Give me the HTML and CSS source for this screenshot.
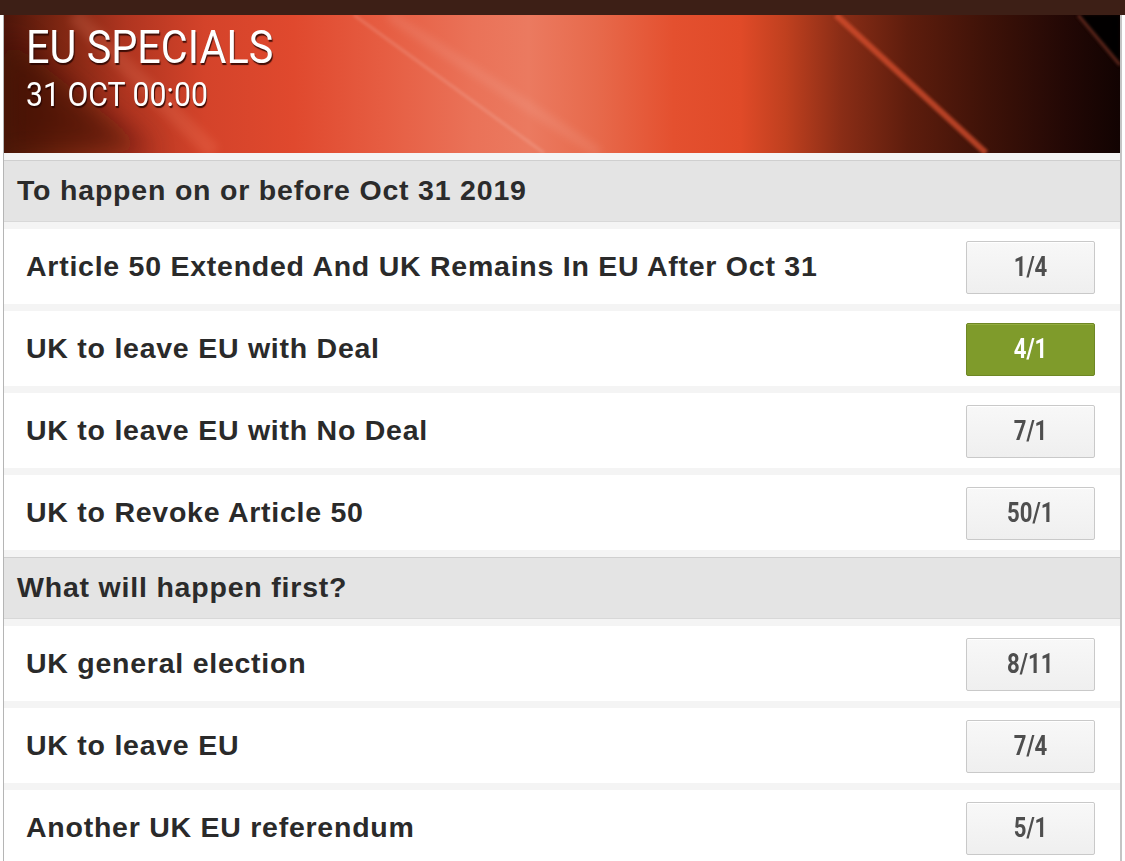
FILE: index.html
```html
<!DOCTYPE html>
<html lang="en">
<head>
<meta charset="utf-8">
<title>EU Specials</title>
<link rel="stylesheet" href="styles.css">
</head>
<body>
<div class="topbar"></div>
<div class="panel">
  <header class="hero">
    <svg class="streaks" viewBox="0 0 1116 138" preserveAspectRatio="none" aria-hidden="true">
      <defs>
        <filter id="blur4" x="-20%" y="-20%" width="140%" height="140%"><feGaussianBlur stdDeviation="4"/></filter>
        <filter id="blur12" x="-50%" y="-50%" width="200%" height="200%"><feGaussianBlur stdDeviation="14"/></filter>
        <filter id="blur2" x="-20%" y="-20%" width="140%" height="140%"><feGaussianBlur stdDeviation="1.8"/></filter>
      </defs>
      <polygon points="0,20 0,138 150,138" fill="#3a0d05" opacity="0.6" filter="url(#blur12)"/>
      <line x1="70" y1="0" x2="210" y2="138" stroke="#ff9a7a" stroke-width="16" opacity="0.16" filter="url(#blur4)"/>
      <line x1="350" y1="0" x2="540" y2="138" stroke="#ffffff" stroke-width="3" opacity="0.14" filter="url(#blur2)"/>
      <line x1="385" y1="0" x2="595" y2="138" stroke="#ffffff" stroke-width="9" opacity="0.09" filter="url(#blur4)"/>
      <line x1="832" y1="0" x2="982" y2="138" stroke="#d9502e" stroke-width="6" opacity="0.75" filter="url(#blur2)"/>
      <polygon points="1072,0 1116,0 1116,52" fill="#000000" opacity="0.9" filter="url(#blur2)"/>
      <line x1="1074" y1="0" x2="1116" y2="50" stroke="#b24a35" stroke-width="3" opacity="0.55" filter="url(#blur2)"/>
    </svg>
    <h1 class="hero-title"><span>EU SPECIALS</span></h1>
    <div class="hero-date"><span>31 OCT 00:00</span></div>
  </header>

  <div class="group">
    <div class="group-head">To happen on or before Oct 31 2019</div>
    <div class="row"><span class="sel">Article 50 Extended And UK Remains In EU After Oct 31</span><button class="odds"><span>1/4</span></button></div>
    <div class="row"><span class="sel">UK to leave EU with Deal</span><button class="odds odds-on"><span>4/1</span></button></div>
    <div class="row"><span class="sel">UK to leave EU with No Deal</span><button class="odds"><span>7/1</span></button></div>
    <div class="row"><span class="sel">UK to Revoke Article 50</span><button class="odds"><span>50/1</span></button></div>
  </div>

  <div class="group">
    <div class="group-head">What will happen first?</div>
    <div class="row"><span class="sel">UK general election</span><button class="odds"><span>8/11</span></button></div>
    <div class="row"><span class="sel">UK to leave EU</span><button class="odds"><span>7/4</span></button></div>
    <div class="row"><span class="sel">Another UK EU referendum</span><button class="odds"><span>5/1</span></button></div>
  </div>
</div>
</body>
</html>
```

FILE: styles.css
```css
html, body {
  margin: 0;
  padding: 0;
  background: #ffffff;
}
body {
  font-family: "Liberation Sans", Arial, sans-serif;
  overflow: hidden;
  height: 861px;
}
.topbar {
  height: 15px;
  background: #3d1f16;
}
.panel {
  margin-left: 3px;
  width: 1116px;
  border-left: 1px solid #b5b5b5;
  border-right: 2px solid #c4c4c4;
  background: #ffffff;
}
.hero {
  position: relative;
  height: 138px;
  overflow: hidden;
  padding: 7px 0 0 22px;
  box-sizing: border-box;
  background:
    linear-gradient(90deg,
      #4e160a 0%,
      #7e2612 5%,
      #b03520 11%,
      #d4432a 18%,
      #e0492e 26%,
      #e65d42 34%,
      #ea7258 42%,
      #eb7a60 47%,
      #e76a4c 53%,
      #e4502f 60%,
      #e04a28 66%,
      #c0401f 70%,
      #8a2d16 75%,
      #5e1d0d 81%,
      #3e1208 88%,
      #230805 95%,
      #120302 100%);
}
.streaks {
  position: absolute;
  inset: 0;
  width: 100%;
  height: 100%;
}
.hero-title {
  position: relative;
  margin: 0;
  font-family: Roboto, "Liberation Sans", sans-serif;
  font-weight: 400;
  font-size: 46px;
  line-height: 50px;
  color: #ffffff;
  text-shadow: 1px 2px 1px rgba(40,5,0,0.85);
}
.hero-title span,
.hero-date span {
  display: inline-block;
  transform: scaleX(0.9);
  transform-origin: left center;
  white-space: nowrap;
}
.hero-date span {
  transform: scaleX(0.89);
}
.hero-date {
  position: relative;
  margin-top: 3px;
  font-family: Roboto, "Liberation Sans", sans-serif;
  font-size: 34px;
  line-height: 38px;
  color: #ffffff;
  text-shadow: 1px 2px 1px rgba(40,5,0,0.85);
}
.group-head {
  border-top: 7px solid #f4f4f4;
  border-bottom: 1px solid #d8d8d8;
  box-shadow: inset 0 1px 0 #cfcfcf;
  background: #e4e4e4;
  height: 61px;
  padding-left: 13px;
  display: flex;
  align-items: center;
  font-size: 28.5px;
  letter-spacing: 0.8px;
  font-weight: 700;
  color: #2b2b2b;
}
.row {
  border-top: 7px solid #f4f4f4;
  height: 75px;
  box-sizing: content-box;
  display: flex;
  align-items: center;
  justify-content: space-between;
  padding: 0 25px 0 22px;
}
.sel {
  font-size: 28.5px;
  font-weight: 700;
  color: #2a2a2a;
  letter-spacing: 0.75px;
}
.odds {
  width: 129px;
  height: 53px;
  margin-top: 1px;
  border: 1px solid #c9c9c9;
  border-radius: 2px;
  background: linear-gradient(#f8f8f8, #efefef);
  box-shadow: inset 0 1px 0 #ffffff;
  font-family: Roboto, "Liberation Sans", sans-serif;
  font-weight: 700;
  font-size: 27px;
  color: #4e4e4e;
  padding: 0;
  display: flex;
  align-items: center;
  justify-content: center;
}
.odds span {
  display: inline-block;
  transform: scaleX(0.82);
}
.odds-on {
  background: #7f9b2b;
  border-color: #6e8724;
  box-shadow: inset 0 1px 0 #94ad40;
  color: #ffffff;
}
```
